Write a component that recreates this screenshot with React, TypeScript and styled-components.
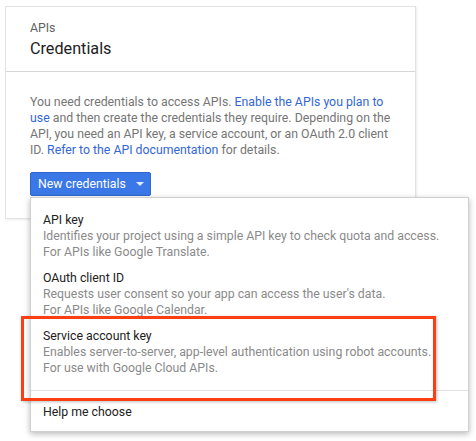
import styled, { createGlobalStyle } from 'styled-components';

const GlobalStyle = createGlobalStyle`
  body {
    margin: 0;
    background: #fff;
    font-family: Roboto, 'Liberation Sans', Arial, sans-serif;
    -webkit-font-smoothing: antialiased;
  }
`;

const Page = styled.div`
  position: relative;
  width: 476px;
  height: 441px;
  padding: 6px 0 0 5px;
  box-sizing: border-box;
  overflow: hidden;
`;

const Card = styled.section`
  width: 411px;
  height: 213px;
  box-sizing: border-box;
  border: 1px solid #e3e3e3;
  box-shadow: 1px 1px 2px rgba(0, 0, 0, 0.08);
  background: #fff;
`;

const CardHeader = styled.header`
  height: 65px;
  box-sizing: border-box;
  padding: 13px 24px 0;
  border-bottom: 1px solid #d6d6d6;
`;

const Eyebrow = styled.div`
  font-size: 12.3px;
  line-height: 16px;
  color: #616161;
`;

const Title = styled.h1`
  margin: 2px 0 0;
  font-size: 16.2px;
  font-weight: 400;
  line-height: 22px;
  color: #212121;
`;

const CardBody = styled.div`
  padding: 22px 24px 0;
`;

const Intro = styled.p`
  margin: 0;
  font-size: 12.3px;
  line-height: 16px;
  color: #757575;
`;

const Link = styled.a`
  color: #3367d6;
  text-decoration: none;
`;

const MenuAnchor = styled.div`
  position: relative;
  margin-top: 14px;
`;

const Button = styled.button`
  display: flex;
  align-items: center;
  gap: 10px;
  width: 121px;
  height: 24px;
  padding: 0 0 0 7px;
  border: 1px solid #2f66cf;
  border-radius: 2px;
  background: #3b78e7;
  color: #fff;
  font-family: inherit;
  font-size: 12.3px;
  cursor: pointer;
`;

const Caret = styled.span`
  width: 0;
  height: 0;
  border-left: 4px solid transparent;
  border-right: 4px solid transparent;
  border-top: 4px solid #e3ebfb;
`;

const Menu = styled.div`
  position: absolute;
  top: 25px;
  left: 0;
  width: 439px;
  height: 235px;
  box-sizing: border-box;
  border: 1px solid #d0d0d0;
  background: #fff;
  box-shadow: 0 2px 6px rgba(0, 0, 0, 0.28);
  padding-top: 9px;
`;

const MenuItem = styled.div<{ $divided?: boolean }>`
  padding: 5px 12px;
  font-size: 12.3px;
  line-height: 16px;
  ${(p) => p.$divided && 'padding-bottom: 14px; border-bottom: 1px solid #e0e0e0; margin-bottom: 8px;'}
`;

const ItemTitle = styled.div`
  color: #212121;
`;

const ItemDesc = styled.div`
  color: #8a8a8a;
`;

const Highlight = styled.div`
  position: absolute;
  left: 21px;
  top: 316px;
  width: 415px;
  height: 85px;
  box-sizing: border-box;
  border: 3px solid #fb3f12;
  box-shadow: 1px 1px 3px rgba(0, 0, 0, 0.25);
  pointer-events: none;
`;

const items = [
  {
    title: 'API key',
    desc: ['Identifies your project using a simple API key to check quota and access.', 'For APIs like Google Translate.'],
  },
  {
    title: 'OAuth client ID',
    desc: ["Requests user consent so your app can access the user's data.", 'For APIs like Google Calendar.'],
  },
  {
    title: 'Service account key',
    desc: ['Enables server-to-server, app-level authentication using robot accounts.', 'For use with Google Cloud APIs.'],
  },
];

export default function App() {
  return (
    <Page>
      <GlobalStyle />
      <Card>
        <CardHeader>
          <Eyebrow>APIs</Eyebrow>
          <Title>Credentials</Title>
        </CardHeader>
        <CardBody>
          <Intro>
            You need credentials to access APIs. <Link href="#">Enable the APIs you plan to use</Link> and then
            create the credentials they require. Depending on the API, you need an API key, a service account, or an
            OAuth 2.0 client ID. <Link href="#">Refer to the API documentation</Link> for details.
          </Intro>
          <MenuAnchor>
            <Button>
              New credentials
              <Caret />
            </Button>
            <Menu>
              {items.map((it, i) => (
                <MenuItem key={it.title} $divided={i === items.length - 1}>
                  <ItemTitle>{it.title}</ItemTitle>
                  {it.desc.map((d) => (
                    <ItemDesc key={d}>{d}</ItemDesc>
                  ))}
                </MenuItem>
              ))}
              <MenuItem>
                <ItemTitle>Help me choose</ItemTitle>
              </MenuItem>
            </Menu>
          </MenuAnchor>
        </CardBody>
      </Card>
      <Highlight />
    </Page>
  );
}
